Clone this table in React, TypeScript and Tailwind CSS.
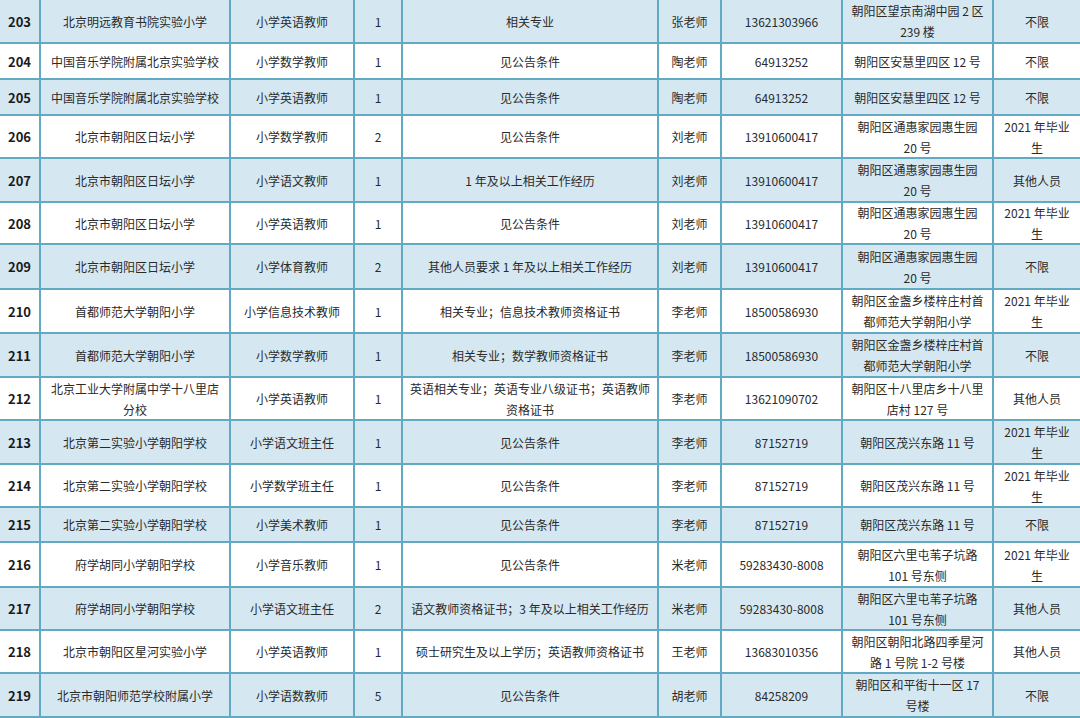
import React from "react";

type Row = {
  no: string;
  school: React.ReactNode;
  pos: string;
  n: string;
  req: React.ReactNode;
  contact: string;
  phone: string;
  addr: React.ReactNode;
  cat: React.ReactNode;
};

const G = (
  <>
    2021 年毕业
    <br />生
  </>
);

const rows: Row[] = [
  { no: "203", school: "北京明远教育书院实验小学", pos: "小学英语教师", n: "1", req: "相关专业", contact: "张老师", phone: "13621303966", addr: <>朝阳区望京南湖中园 2 区<br />239 楼</>, cat: "不限" },
  { no: "204", school: "中国音乐学院附属北京实验学校", pos: "小学数学教师", n: "1", req: "见公告条件", contact: "陶老师", phone: "64913252", addr: "朝阳区安慧里四区 12 号", cat: "不限" },
  { no: "205", school: "中国音乐学院附属北京实验学校", pos: "小学英语教师", n: "1", req: "见公告条件", contact: "陶老师", phone: "64913252", addr: "朝阳区安慧里四区 12 号", cat: "不限" },
  { no: "206", school: "北京市朝阳区日坛小学", pos: "小学数学教师", n: "2", req: "见公告条件", contact: "刘老师", phone: "13910600417", addr: <>朝阳区通惠家园惠生园<br />20 号</>, cat: G },
  { no: "207", school: "北京市朝阳区日坛小学", pos: "小学语文教师", n: "1", req: "1 年及以上相关工作经历", contact: "刘老师", phone: "13910600417", addr: <>朝阳区通惠家园惠生园<br />20 号</>, cat: "其他人员" },
  { no: "208", school: "北京市朝阳区日坛小学", pos: "小学英语教师", n: "1", req: "见公告条件", contact: "刘老师", phone: "13910600417", addr: <>朝阳区通惠家园惠生园<br />20 号</>, cat: G },
  { no: "209", school: "北京市朝阳区日坛小学", pos: "小学体育教师", n: "2", req: "其他人员要求 1 年及以上相关工作经历", contact: "刘老师", phone: "13910600417", addr: <>朝阳区通惠家园惠生园<br />20 号</>, cat: "不限" },
  { no: "210", school: "首都师范大学朝阳小学", pos: "小学信息技术教师", n: "1", req: "相关专业；信息技术教师资格证书", contact: "李老师", phone: "18500586930", addr: <>朝阳区金盏乡楼梓庄村首<br />都师范大学朝阳小学</>, cat: G },
  { no: "211", school: "首都师范大学朝阳小学", pos: "小学数学教师", n: "1", req: "相关专业；数学教师资格证书", contact: "李老师", phone: "18500586930", addr: <>朝阳区金盏乡楼梓庄村首<br />都师范大学朝阳小学</>, cat: "不限" },
  { no: "212", school: <>北京工业大学附属中学十八里店<br />分校</>, pos: "小学英语教师", n: "1", req: <>英语相关专业；英语专业八级证书；英语教师<br />资格证书</>, contact: "李老师", phone: "13621090702", addr: <>朝阳区十八里店乡十八里<br />店村 127 号</>, cat: "其他人员" },
  { no: "213", school: "北京第二实验小学朝阳学校", pos: "小学语文班主任", n: "1", req: "见公告条件", contact: "李老师", phone: "87152719", addr: "朝阳区茂兴东路 11 号", cat: G },
  { no: "214", school: "北京第二实验小学朝阳学校", pos: "小学数学班主任", n: "1", req: "见公告条件", contact: "李老师", phone: "87152719", addr: "朝阳区茂兴东路 11 号", cat: G },
  { no: "215", school: "北京第二实验小学朝阳学校", pos: "小学美术教师", n: "1", req: "见公告条件", contact: "李老师", phone: "87152719", addr: "朝阳区茂兴东路 11 号", cat: "不限" },
  { no: "216", school: "府学胡同小学朝阳学校", pos: "小学音乐教师", n: "1", req: "见公告条件", contact: "米老师", phone: "59283430-8008", addr: <>朝阳区六里屯苇子坑路<br />101 号东侧</>, cat: G },
  { no: "217", school: "府学胡同小学朝阳学校", pos: "小学语文班主任", n: "2", req: "语文教师资格证书；3 年及以上相关工作经历", contact: "米老师", phone: "59283430-8008", addr: <>朝阳区六里屯苇子坑路<br />101 号东侧</>, cat: "其他人员" },
  { no: "218", school: "北京市朝阳区星河实验小学", pos: "小学英语教师", n: "1", req: "硕士研究生及以上学历；英语教师资格证书", contact: "王老师", phone: "13683010356", addr: <>朝阳区朝阳北路四季星河<br />路 1 号院 1-2 号楼</>, cat: "其他人员" },
  { no: "219", school: "北京市朝阳师范学校附属小学", pos: "小学语数教师", n: "5", req: "见公告条件", contact: "胡老师", phone: "84258209", addr: <>朝阳区和平街十一区 17<br />号楼</>, cat: "不限" },
];

function Cell({ children, blue, bold }: { children: React.ReactNode; blue: boolean; bold?: boolean }) {
  return (
    <div
      className={
        "flex items-center justify-center text-center leading-[21px] " +
        (blue ? "bg-[#d5e8f2] " : "bg-white ") +
        (bold ? "font-bold text-[13px] text-[#1a1a1a]" : "text-[12px] text-[#2a2a2a]")
      }
    >
      <div>{children}</div>
    </div>
  );
}

export default function App() {
  return (
    <div className="w-[1080px] h-[718px] overflow-hidden bg-[#62aac4] pb-[2px] font-['Noto_Sans_CJK_SC','Noto_Sans',sans-serif]">
      <div className="grid grid-cols-[39px_188px_122px_46px_254px_61px_119px_149px_86px] grid-rows-[42px_34px_34px_41px_42px_40px_43px_42px_42px_41px_42px_41px_33px_43px_41px_41px_42px] gap-[2px]">
        {rows.map((r, i) => {
          const blue = i % 2 === 0;
          return (
            <React.Fragment key={r.no}>
              <Cell blue={blue} bold>{r.no}</Cell>
              <Cell blue={blue}>{r.school}</Cell>
              <Cell blue={blue}>{r.pos}</Cell>
              <Cell blue={blue}>{r.n}</Cell>
              <Cell blue={blue}>{r.req}</Cell>
              <Cell blue={blue}>{r.contact}</Cell>
              <Cell blue={blue}>{r.phone}</Cell>
              <Cell blue={blue}>{r.addr}</Cell>
              <Cell blue={blue}>{r.cat}</Cell>
            </React.Fragment>
          );
        })}
      </div>
    </div>
  );
}
